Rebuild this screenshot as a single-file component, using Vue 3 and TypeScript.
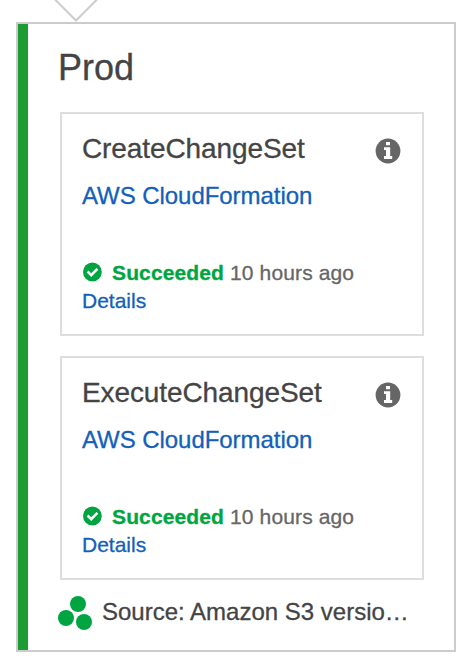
<script setup lang="ts">
interface Action {
  name: string
  provider: string
  status: string
  when: string
}

const stage = 'Prod'
const source = 'Source: Amazon S3 versio…'
const actions: Action[] = [
  { name: 'CreateChangeSet', provider: 'AWS CloudFormation', status: 'Succeeded', when: '10 hours ago' },
  { name: 'ExecuteChangeSet', provider: 'AWS CloudFormation', status: 'Succeeded', when: '10 hours ago' },
]
</script>

<template>
  <main class="page">
    <svg class="arrow" width="48" height="22" viewBox="0 0 48 22" aria-hidden="true">
      <path d="M2 -1.5 24 20.5 46 -1.5" fill="none" stroke="#ccc" stroke-width="2" />
    </svg>
    <section class="stage">
      <div class="bar"></div>
      <div class="body">
        <h1 class="title">{{ stage }}</h1>
        <div class="cards">
          <article v-for="action in actions" :key="action.name" class="card">
            <header class="head">
              <h2 class="name">{{ action.name }}</h2>
              <svg class="info" width="26" height="26" viewBox="0 0 26 26" aria-hidden="true">
                <circle cx="13" cy="13" r="12.4" fill="#666" />
                <path d="M11 4h4v3.2h-4zM9 9.2h6.2v8.9h2V21H9v-2.9h2v-6H9z" fill="#fff" />
              </svg>
            </header>
            <a class="provider">{{ action.provider }}</a>
            <div class="status">
              <svg class="check" width="20" height="20" viewBox="0 0 20 20" aria-hidden="true">
                <circle cx="10.4" cy="10" r="9.4" fill="#00a542" />
                <path d="m5.6 9.5 3.6 3.6 6.2-6.2" fill="none" stroke="#fff" stroke-width="2.6" />
              </svg>
              <strong class="state">{{ action.status }}</strong>
              <span class="when">{{ action.when }}</span>
            </div>
            <a class="details">Details</a>
          </article>
        </div>
        <footer class="source">
          <svg class="dots" width="34" height="34" viewBox="0 0 34 34" aria-hidden="true">
            <g fill="#00a542">
              <circle cx="20" cy="8" r="8" />
              <circle cx="8" cy="22" r="8" />
              <circle cx="26" cy="26" r="8" />
            </g>
          </svg>
          <span class="revision">{{ source }}</span>
        </footer>
      </div>
    </section>
  </main>
</template>

<style>
body {
  background: #fff;
}
</style>

<style scoped>
.page {
  box-sizing: border-box;
  height: 668px;
  padding: 0 14px 16px 16px;
  overflow: hidden;
  color: #444;
  font-family: "Liberation Sans", Arial, sans-serif;
  white-space: nowrap;
  -webkit-text-stroke: 0.3px currentColor;
}
.arrow {
  display: block;
  margin-left: 36px;
}
.stage {
  box-sizing: border-box;
  display: flex;
  height: 630px;
  border: 2px solid #ccc;
}
.bar {
  width: 10px;
  flex: none;
  background: #1d9c33;
}
.body {
  flex: 1;
  min-width: 0;
  padding: 24px 30px 0 32px;
}
.title {
  margin: 0 0 24px -2px;
  font-size: 36px;
  font-weight: 400;
  line-height: 40px;
}
.cards {
  display: grid;
  gap: 20px;
}
.card {
  box-sizing: border-box;
  height: 224px;
  padding: 19px 20px 0;
  border: 2px solid #ddd;
}
.head {
  display: flex;
  justify-content: space-between;
  height: 32px;
}
.name {
  margin: 0;
  font-size: 28px;
  font-weight: 400;
  line-height: 32px;
  letter-spacing: -0.1px;
}
.info {
  margin: 5px 1px 0 0;
}
.provider {
  display: block;
  margin-top: 17px;
  color: #145fba;
  font-size: 24px;
  line-height: 28px;
  letter-spacing: -0.05px;
}
.status {
  display: flex;
  margin-top: 49px;
  font-size: 21px;
  line-height: 28px;
}
.check {
  margin: 3px 10px 0 0;
}
.state {
  margin-right: 6px;
  color: #00a542;
  letter-spacing: 0.13px;
}
.when {
  color: #666;
  letter-spacing: 0.12px;
}
.details {
  display: block;
  color: #145fba;
  font-size: 21px;
  line-height: 28px;
}
.source {
  display: flex;
  align-items: flex-start;
  margin: 16px 0 0 -2px;
}
.revision {
  margin-left: 10px;
  font-size: 24px;
  line-height: 32px;
}
</style>
